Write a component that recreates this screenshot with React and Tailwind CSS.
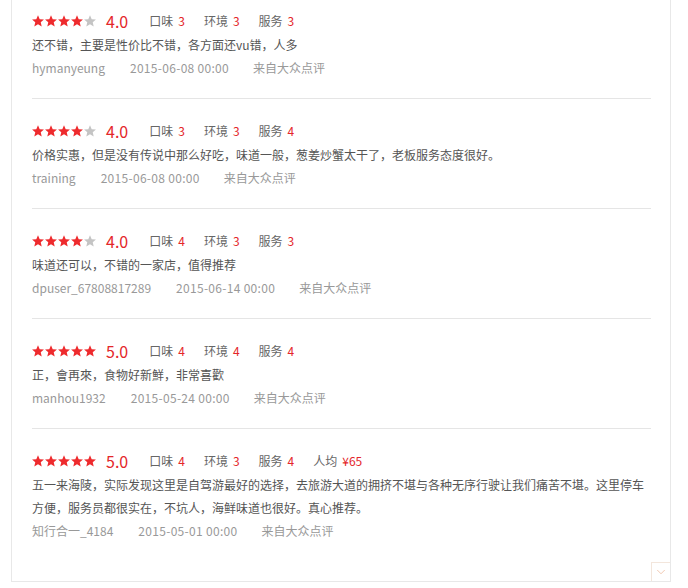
import { ChevronDown } from 'lucide-react';

const reviews = [
  {
    score: 4,
    taste: 3,
    env: 3,
    service: 3,
    text: '还不错，主要是性价比不错，各方面还vu错，人多',
    user: 'hymanyeung',
    time: '2015-06-08 00:00',
  },
  {
    score: 4,
    taste: 3,
    env: 3,
    service: 4,
    text: '价格实惠，但是没有传说中那么好吃，味道一般，葱姜炒蟹太干了，老板服务态度很好。',
    user: 'training',
    time: '2015-06-08 00:00',
  },
  {
    score: 4,
    taste: 4,
    env: 3,
    service: 3,
    text: '味道还可以，不错的一家店，值得推荐',
    user: 'dpuser_67808817289',
    time: '2015-06-14 00:00',
  },
  {
    score: 5,
    taste: 4,
    env: 4,
    service: 4,
    text: '正，會再來，食物好新鮮，非常喜歡',
    user: 'manhou1932',
    time: '2015-05-24 00:00',
  },
  {
    score: 5,
    taste: 4,
    env: 3,
    service: 4,
    price: '¥65',
    text: '五一来海陵，实际发现这里是自驾游最好的选择，去旅游大道的拥挤不堪与各种无序行驶让我们痛苦不堪。这里停车方便，服务员都很实在，不坑人，海鲜味道也很好。真心推荐。',
    user: '知行合一_4184',
    time: '2015-05-01 00:00',
  },
];

function Star({ on }) {
  return (
    <svg width="12" height="12" viewBox="1 1.5 22 21" className="mr-[1px]">
      <path
        d="M12 1.5l3.1 7.2 7.8.6-5.9 5.1 1.8 7.6L12 17.9 5.2 22l1.8-7.6L1.1 9.3l7.8-.6z"
        fill={on ? '#ee2a2d' : '#c4c4c4'}
      />
    </svg>
  );
}

function Score({ label, value }) {
  return (
    <span className="mr-[19px] text-[#666]">
      {label}
      <span className="ml-[5px] text-[#e4262a]">{value}</span>
    </span>
  );
}

export default function App() {
  return (
    <div
      className="h-[588px] bg-white pl-[11px]"
      style={{ fontFamily: '"Noto Sans CJK SC", "Liberation Sans", sans-serif' }}
    >
      <div className="relative w-[660px] border-x border-b border-[#e8e8e8] pl-[20px] pr-[19px] pb-[39px]">
        {reviews.map((r, i) => (
          <div
            key={i}
            className={`${i === 0 ? 'pt-[9px]' : 'pt-[20px]'} ${
              i < reviews.length - 1 ? 'pb-[19px] border-b border-[#e5e5e5]' : ''
            } text-[12px]`}
          >
            <div className="flex items-center h-[24px]">
              <div className="flex items-center">
                {[1, 2, 3, 4, 5].map((n) => (
                  <Star key={n} on={n <= r.score} />
                ))}
              </div>
              <span className="ml-[9px] mr-[21px] text-[16px] leading-[24px] text-[#e4262a]">
                {r.score}.0
              </span>
              <Score label="口味" value={r.taste} />
              <Score label="环境" value={r.env} />
              <Score label="服务" value={r.service} />
              {r.price && <Score label="人均" value={r.price} />}
            </div>
            <p className="leading-[23px] text-[#555]">{r.text}</p>
            <div className="flex leading-[23px] text-[#999]">
              <span className="mr-[25px]">{r.user}</span>
              <span className="mr-[24px] tracking-[0.3px]">{r.time}</span>
              <span>来自大众点评</span>
            </div>
          </div>
        ))}
        <button className="absolute right-0 bottom-0 w-[19px] h-[19px] border-l border-t border-[#f3e6dc] bg-white flex items-center justify-center">
          <ChevronDown size={14} strokeWidth={1} color="#e7a27a" />
        </button>
      </div>
    </div>
  );
}
